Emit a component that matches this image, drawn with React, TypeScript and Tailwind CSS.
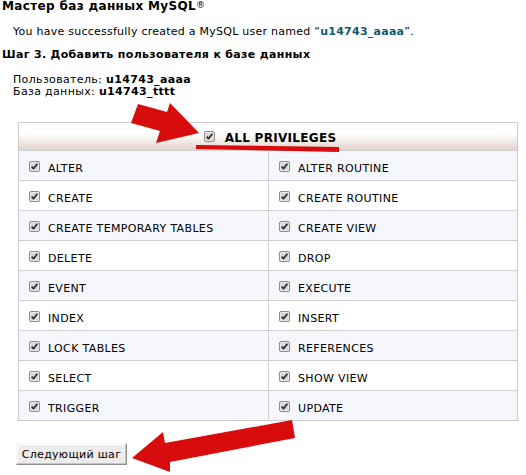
import React from "react";

function Check() {
  return (
    <svg width="11" height="11" viewBox="0 0 11 11" className="block shrink-0">
      <rect x="0.5" y="0.5" width="10" height="10" rx="1.5" fill="#d9d9d9" stroke="#8c8c8c" />
      <rect x="1.5" y="1.5" width="8" height="8" rx="1" fill="none" stroke="#eeeeee" strokeWidth="0.8" />
      <path d="M2.6 5.6 L4.5 7.6 L8.4 2.8" stroke="#333333" strokeWidth="1.8" fill="none" strokeLinejoin="round" />
    </svg>
  );
}

const rows: [string, string][] = [
  ["ALTER", "ALTER ROUTINE"],
  ["CREATE", "CREATE ROUTINE"],
  ["CREATE TEMPORARY TABLES", "CREATE VIEW"],
  ["DELETE", "DROP"],
  ["EVENT", "EXECUTE"],
  ["INDEX", "INSERT"],
  ["LOCK TABLES", "REFERENCES"],
  ["SELECT", "SHOW VIEW"],
  ["TRIGGER", "UPDATE"],
];

function Cell({ label, right }: { label: string; right?: boolean }) {
  return (
    <div className={"h-[29px] flex items-start pl-[10px] pt-[10px] gap-[8px] " + (right ? "" : "border-r border-[#d2d2d2]")}>
      <Check />
      <span className="mt-[2px] text-[11px] leading-[11px] tracking-[0.35px] whitespace-nowrap">{label}</span>
    </div>
  );
}

export default function App() {
  return (
    <div className="relative w-[526px] h-[475px] bg-white text-black overflow-hidden font-['DejaVu_Sans',Verdana,sans-serif]">
      <h1 className="pl-[2px] text-[12px] leading-[12px] font-bold tracking-[0.35px] whitespace-nowrap">
        Мастер баз данных MySQL<sup className="text-[9px] font-normal relative top-[-2px]">®</sup>
      </h1>
      <p className="mt-[13px] pl-[13px] text-[11px] leading-[13px] tracking-[0.25px] whitespace-nowrap">
        You have successfully created a MySQL user named “<b className="text-[#0e5c6e]">u14743_aaaa</b>”.
      </p>
      <h2 className="mt-[10px] pl-[2px] text-[11px] leading-[13px] font-bold tracking-[0.33px] whitespace-nowrap">
        Шаг 3. Добавить пользователя к базе данных
      </h2>
      <div className="mt-[13px] pl-[13px] text-[11px] leading-[12px] tracking-[0.34px] whitespace-nowrap">
        <div>
          Пользователь: <b>u14743_aaaa</b>
        </div>
        <div>
          База данных: <b>u14743_tttt</b>
        </div>
      </div>

      <div className="mt-[24px] ml-[18px] w-[500px] border border-[#cccccc]">
        <div className="h-[28px] border-b border-[#d2d2d2] bg-gradient-to-b from-white from-40% to-[#e1d4cb] flex justify-center items-start pt-[8px] pl-[4px] gap-[10px]">
          <Check />
          <span className="mt-[1px] text-[12px] leading-[12px] font-bold tracking-[0.3px] whitespace-nowrap">ALL PRIVILEGES</span>
        </div>
        {rows.map(([a, b], i) => (
          <div
            key={a}
            className={
              "grid grid-cols-[250px_248px] " +
              (i % 2 === 0 ? "bg-[#f6f7fc] " : "bg-white ") +
              (i < rows.length - 1 ? "border-b border-[#d2d2d2]" : "")
            }
          >
            <Cell label={a} />
            <Cell label={b} right />
          </div>
        ))}
      </div>

      <button className="mt-[22px] ml-[16px] h-[22px] w-[111px] bg-[#ececec] border border-t-[#f4f4f4] border-l-[#f4f4f4] border-r-[#8f8f8f] border-b-[#8f8f8f] text-[11px] leading-[11px] tracking-[0.3px] whitespace-nowrap shadow-[inset_-1px_-1px_0_#c4c4c4,inset_1px_1px_0_#ffffff] text-black">
        Следующий шаг
      </button>

      <svg className="absolute inset-0 pointer-events-none" width="526" height="475" viewBox="0 0 526 475">
        <polygon points="138,104 167,112 170,103 199,133 156,143 160,131 131,123" fill="#d80c0c" />
        <polygon points="196,145 339,147 339,152 196,149" fill="#d80c0c" />
        <polygon points="292,420 295,438 170,462 170,472 132,458 163,432 165,443" fill="#d80c0c" />
      </svg>
    </div>
  );
}
